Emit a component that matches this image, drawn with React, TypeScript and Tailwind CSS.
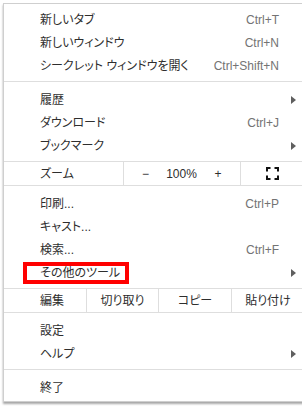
import React from "react";

const Arrow = () => (
  <svg width="5" height="8" viewBox="0 0 5 8" className="block">
    <path d="M0 0 L5 4 L0 8 Z" fill="#5f5f5f" />
  </svg>
);

function Row({ label, shortcut, arrow }: { label: string; shortcut?: string; arrow?: boolean }) {
  return (
    <div className={`flex h-[23px] items-center pl-[36px] ${arrow ? "pr-[8px]" : "pr-[25px]"}`}>
      <span className="flex-1 text-[#2e2e2e]">{label}</span>
      {shortcut && <span className="text-[#737373]">{shortcut}</span>}
      {arrow && <Arrow />}
    </div>
  );
}

const Sep = () => <div className="mt-[4px] mb-[6px] h-px bg-[#dedede]" />;

export default function App() {
  return (
    <div className="relative h-[406px] w-[302px] overflow-hidden bg-white font-['Liberation_Sans','Noto_Sans_CJK_JP',sans-serif] text-[12px] leading-none [font-feature-settings:'palt']">
      <div className="pl-[3px] pt-[3px]">
        <div className="w-[301px] border-l border-t border-b border-[#cfcfcf] bg-white pt-[4px] pb-[2px] shadow-[0_2px_2px_rgba(0,0,0,0.35)]">
          <Row label="新しいタブ" shortcut="Ctrl+T" />
          <Row label="新しいウィンドウ" shortcut="Ctrl+N" />
          <Row label="シークレット ウィンドウを開く" shortcut="Ctrl+Shift+N" />
          <Sep />
          <Row label="履歴" arrow />
          <Row label="ダウンロード" shortcut="Ctrl+J" />
          <Row label="ブックマーク" arrow />
          <div className="mt-[4px] mb-[6px] flex h-[25px] border-y border-[#dedede] text-[#2e2e2e]">
            <div className="flex w-[119px] items-center pl-[36px]">ズーム</div>
            <div className="flex border-l border-[#dedede]">
              <div className="flex w-[43px] items-center justify-center">−</div>
              <div className="flex w-[29px] items-center justify-center">100%</div>
              <div className="flex w-[44px] items-center justify-center">+</div>
            </div>
            <div className="flex flex-1 items-center justify-center border-l border-[#dedede]">
              <svg width="13" height="13" viewBox="0 0 13 13" fill="none" stroke="#111" strokeWidth="2">
                <path d="M1 4.5V1H4.5" />
                <path d="M8.5 1H12V4.5" />
                <path d="M12 8.5V12H8.5" />
                <path d="M4.5 12H1V8.5" />
              </svg>
            </div>
          </div>
          <Row label="印刷..." shortcut="Ctrl+P" />
          <Row label="キャスト..." />
          <Row label="検索..." shortcut="Ctrl+F" />
          <Row label="その他のツール" arrow />
          <div className="mt-[4px] mb-[6px] flex h-[25px] border-y border-[#dedede] text-[#2e2e2e]">
            <div className="flex w-[82px] items-center pl-[36px]">編集</div>
            <div className="flex w-[72px] items-center justify-center border-l border-[#dedede]">切り取り</div>
            <div className="flex w-[73px] items-center justify-center border-l border-[#dedede]">コピー</div>
            <div className="flex flex-1 items-center justify-center border-l border-[#dedede]">貼り付け</div>
          </div>
          <Row label="設定" />
          <Row label="ヘルプ" arrow />
          <Sep />
          <Row label="終了" />
        </div>
      </div>
      <div className="absolute left-[23px] top-[262px] h-[22px] w-[106px] border-[4px] border-[#ff0000]" />
    </div>
  );
}
